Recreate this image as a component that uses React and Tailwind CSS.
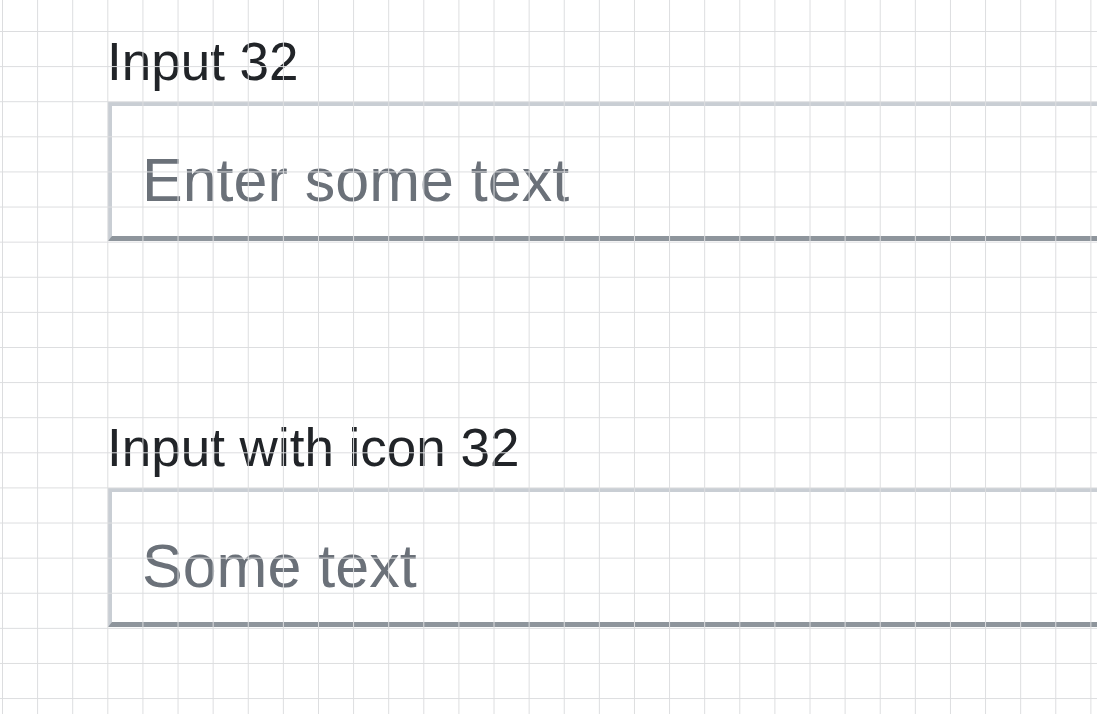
import React from "react";

const FIELDS = [
  { id: "input-32", label: "Input 32", placeholder: "Enter some text" },
  { id: "input-icon-32", label: "Input with icon 32", placeholder: "Some text" },
];

function Field({ id, label, placeholder }) {
  return (
    <div className="flex flex-col">
      <label htmlFor={id} className="-ml-[1px] text-[53px] leading-[61px] text-[#212428] mb-[10px]">
        {label}
      </label>
      <input
        id={id}
        type="text"
        placeholder={placeholder}
        className="w-[1100px] h-[139px] bg-transparent border-t-4 border-l-4 border-b-[5px] border-r-0 border-t-[#c9ced4] border-l-[#c9ced4] border-b-[#8e959c] pl-[30px] pt-[39px] pb-[21px] text-[61px] leading-[70px] text-[#6b7179] placeholder:text-[#6b7179] outline-none"
      />
    </div>
  );
}

export default function App() {
  return (
    <div className="relative w-full h-[714px] overflow-hidden bg-white font-['Liberation_Sans',Arial,sans-serif]">
      <div className="flex flex-col gap-[176px] pl-[108px] pt-[31px]">
        {FIELDS.map((f) => (
          <Field key={f.id} {...f} />
        ))}
      </div>
      {/* grid overlay */}
      <div className="absolute inset-0 pointer-events-none bg-[linear-gradient(to_right,#dcdddf_1px,transparent_1px),linear-gradient(to_bottom,#dcdddf_1px,transparent_1px)] bg-[size:35.12px_35.12px] bg-[position:2px_31px]" />
    </div>
  );
}
